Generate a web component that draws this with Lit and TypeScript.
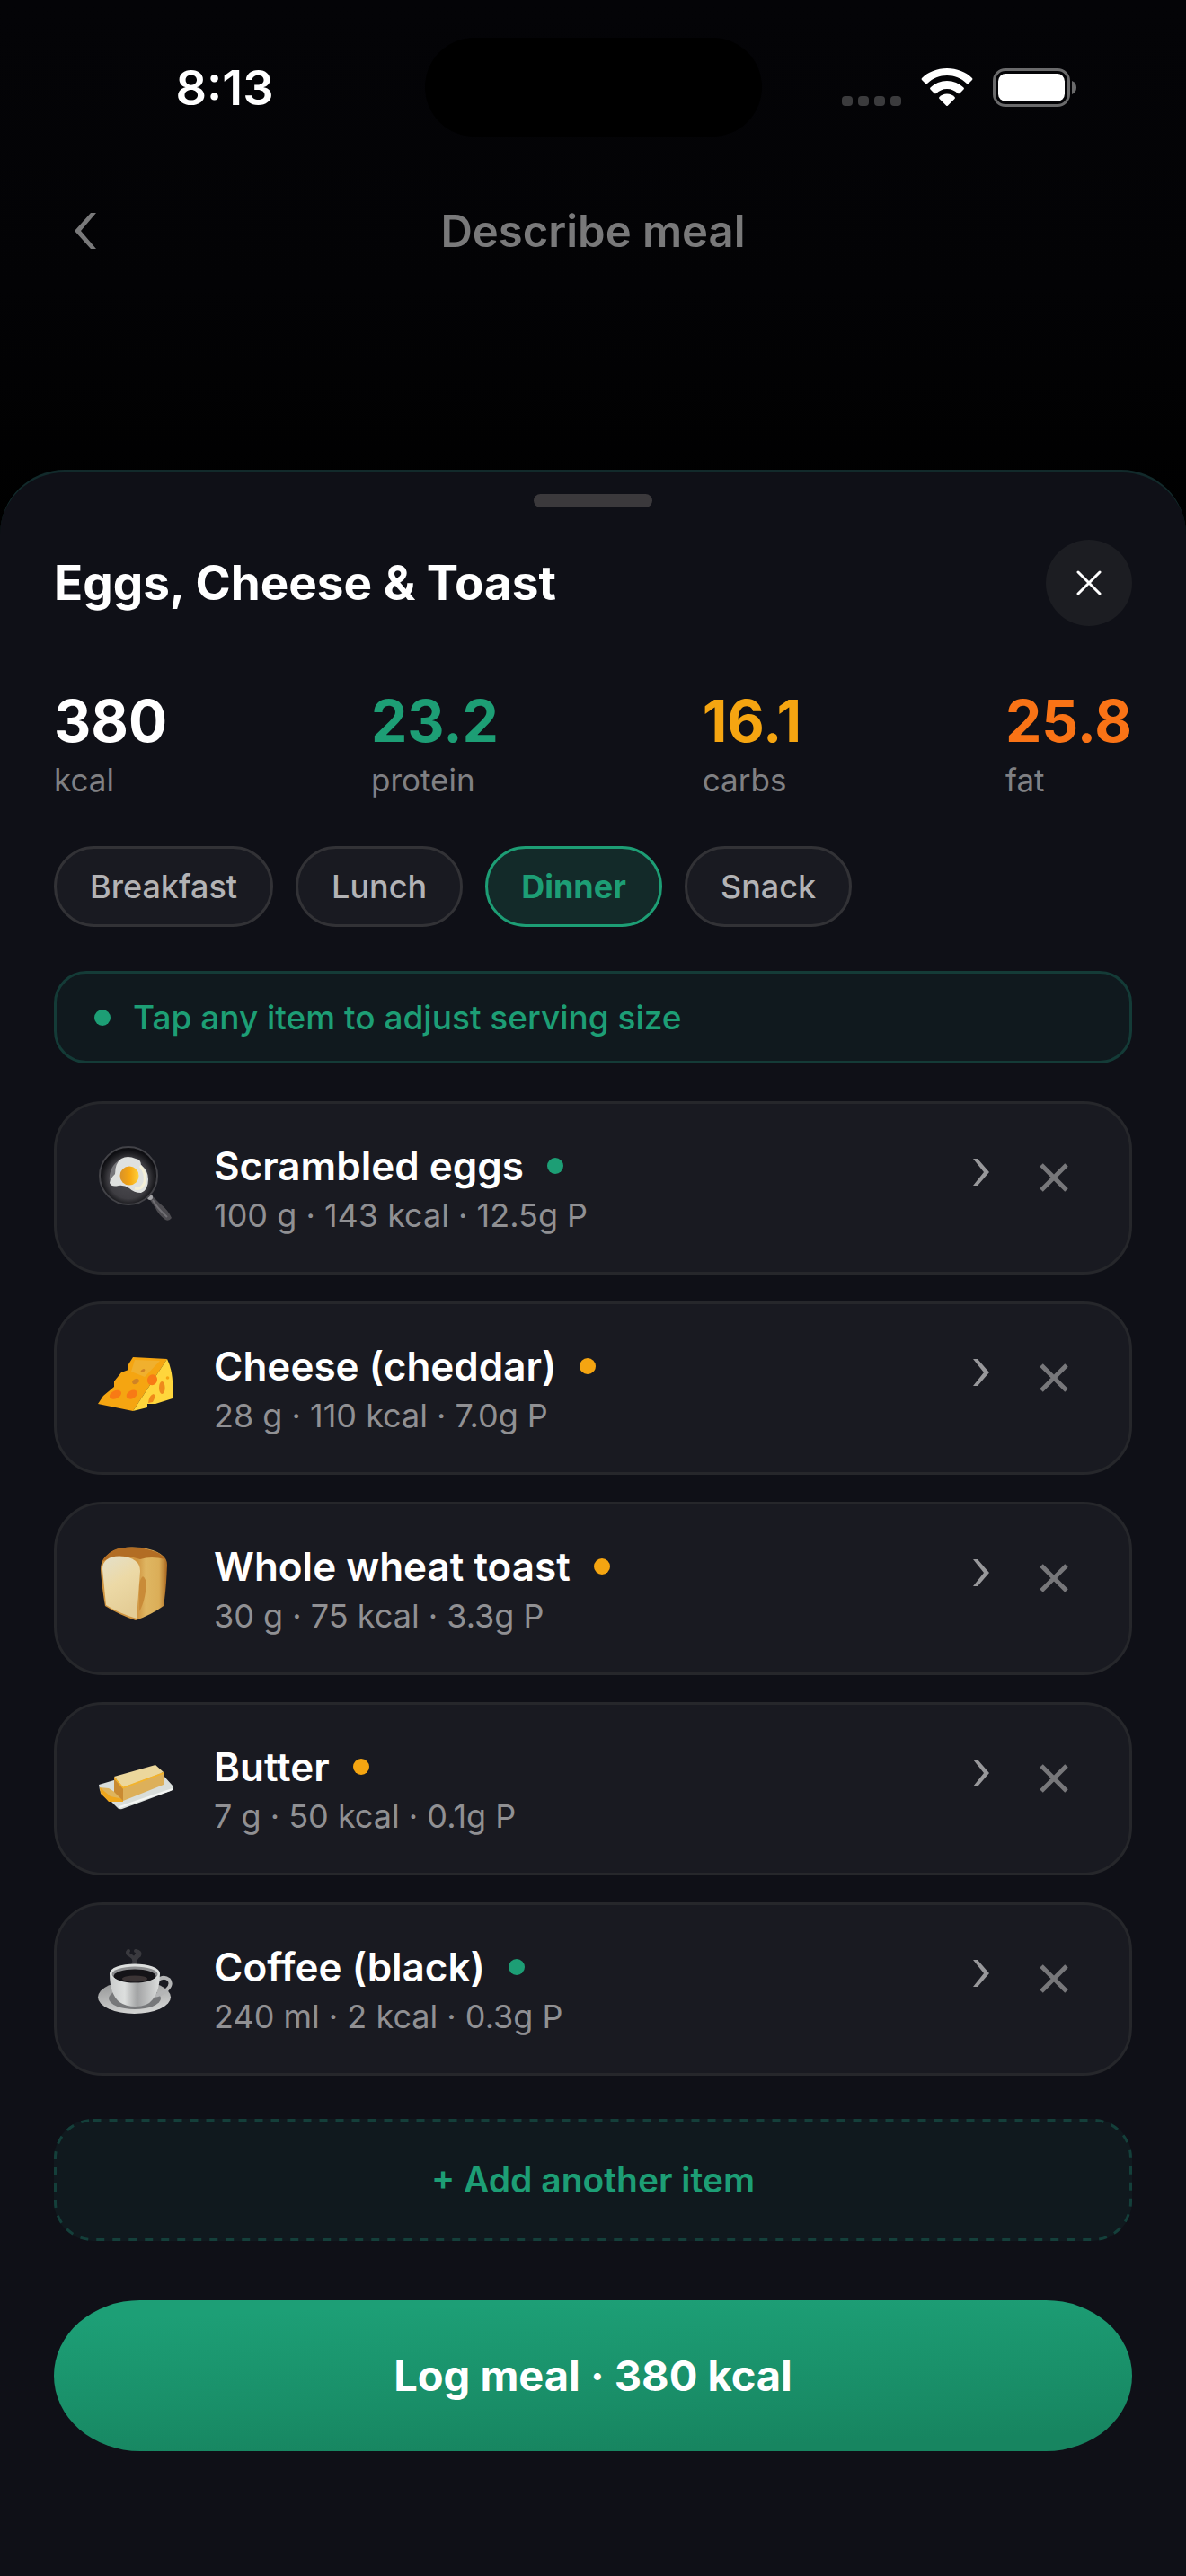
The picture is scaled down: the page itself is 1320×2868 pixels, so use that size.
import { LitElement, css, html, svg } from 'lit';
import { customElement, property, state } from 'lit/decorators.js';
import { classMap } from 'lit/directives/class-map.js';

const pictures: Record<string, any> = {
  eggs: svg`
    <defs>
      <radialGradient id="pan" cx="50%" cy="55%" r="50%">
        <stop offset="0" stop-color="#4c4b50"/>
        <stop offset="0.7" stop-color="#3e3d42"/>
        <stop offset="0.88" stop-color="#1e1e22"/>
        <stop offset="1" stop-color="#0e0e12"/>
      </radialGradient>
      <linearGradient id="yolk" x1="0" x2="1">
        <stop offset="0" stop-color="#d8922a"/>
        <stop offset="0.5" stop-color="#f5a511"/>
        <stop offset="1" stop-color="#ffd23c"/>
      </linearGradient>
    </defs>
    <path d="M57 59L61 57L70 66Q79 73 83 82Q80 86 76 84Q68 78 65 71Z" fill="#4c4b50"/>
    <path d="M62 62Q66 70 78 81" stroke="#706f74" stroke-width="2" fill="none"/>
    <circle cx="59" cy="59" r="3" fill="#a5a5a8"/>
    <circle cx="35" cy="35" r="32" fill="url(#pan)" stroke="#424247" stroke-width="2"/>
    <path d="M14 42Q12 25 27 16Q20 28 19 38Z" fill="#77777b"/>
    <path d="M27 16Q34 12 43 16Q49 17 49 23Q57 29 57 39Q57 51 49 54Q41 54 36 49Q30 45 24 46Q16 48 14 43Q15 38 20 33Q20 21 27 16Z" fill="#dfe1df"/>
    <path d="M48 24Q55 32 53 42Q50 51 42 49" stroke="#f4efd7" stroke-width="3" fill="none"/>
    <circle cx="36" cy="35" r="10.5" fill="url(#yolk)"/>`,
  cheese: svg`
    <path d="M40 14L78 16L40 74L1 66L7 57L19 47L19 41L27 31L35 28L35 22Z" fill="#f5a511"/>
    <path d="M42 17L70 18L53 36L38 30Z" fill="#f0b02e"/>
    <path d="M78 16Q86 32 84 60L65 66L56 66L56 70L40 74Z" fill="#ffd63c"/>
    <ellipse cx="20.500" cy="56" rx="7" ry="4.500" transform="rotate(-25 20 56)" fill="#f87a15"/>
    <ellipse cx="39" cy="55.500" rx="6.500" ry="4.500" transform="rotate(-30 39 56)" fill="#f87a15"/>
    <ellipse cx="43" cy="41" rx="4" ry="2.800" transform="rotate(-25 43 41)" fill="#cf8325"/>
    <ellipse cx="51" cy="29" rx="2.500" ry="1.500" transform="rotate(-30 51 29)" fill="#cf8325"/>
    <ellipse cx="61.500" cy="39" rx="5.500" ry="6" transform="rotate(25 61 39)" fill="#f87a15"/>
    <ellipse cx="72.300" cy="48" rx="3.300" ry="7" fill="#ef8a1c"/>
    <circle cx="78.500" cy="37" r="1.800" fill="#f5a511"/>
    <path d="M57 65Q58 56 63 55Q66 57 62 64Z" fill="#f08a1a"/>`,
  toast: svg`
    <defs>
      <linearGradient id="crumb" x1="0" y1="0" x2="0.4" y2="1">
        <stop offset="0" stop-color="#e4e0cb"/>
        <stop offset="0.5" stop-color="#ecd9a6"/>
        <stop offset="1" stop-color="#e4cd96"/>
      </linearGradient>
      <linearGradient id="crust" x1="0" x2="1">
        <stop offset="0.55" stop-color="#cf9440"/>
        <stop offset="0.68" stop-color="#dfb662"/>
        <stop offset="0.88" stop-color="#dbae58"/>
        <stop offset="1" stop-color="#a8661f"/>
      </linearGradient>
    </defs>
    <path d="M4 27Q4 14 19 6Q30 1 50 3Q78 8 78 22Q77 50 74 68Q60 78 43 84Q25 78 9 68Q5 45 4 27Z" fill="url(#crust)"/>
    <path d="M5 19Q12 7 24 4Q38 1 52 4Q70 7 76 16Q60 12 48 16Q26 8 5 19Z" fill="#b26d24"/>
    <path d="M51 35Q56 38 54 52Q52 66 47 74L47 45Q48 37 51 35Z" fill="#c98b38"/>
    <path d="M6 27Q6 13 25 12.500Q48 14 48 29L44 82Q24 76 10 67Z" fill="url(#crumb)"/>`,
  butter: svg`
    <g transform="translate(0 -2)">
      <path d="M2 46L66 27L84 47Q87 50 82 53L28 73Q24 74 22 71L3 52Z" fill="#d9dedb"/>
      <path d="M25 71L84 51" stroke="#f4f6f4" stroke-width="2"/>
      <path d="M3 49L13 50L29 60L29 64L14 65L4 56Z" fill="#dfb45c"/>
      <path d="M3 49L15 59L29 62L29 65L13 65L4 55Z" fill="#efa71e"/>
      <path d="M19 37L65 24L74 32L29 49Z" fill="#ecd79c"/>
      <path d="M29 49L74 32V46L29 64Z" fill="#ddb05a"/>
      <path d="M19 37L29 49V64L19 54Z" fill="#c98a32"/>
      <path d="M19 38L29 49.500L74 33" stroke="#f5b429" stroke-width="1.500" fill="none"/>
    </g>`,
  coffee: svg`
    <defs>
      <linearGradient id="cup" x1="0" x2="1">
        <stop offset="0" stop-color="#c9cbcb"/>
        <stop offset="0.3" stop-color="#dddfde"/>
        <stop offset="0.55" stop-color="#a2a3a4"/>
        <stop offset="1" stop-color="#dddfde"/>
      </linearGradient>
      <linearGradient id="saucer" x1="0" y1="0" x2="0.3" y2="1">
        <stop offset="0" stop-color="#8f9091"/>
        <stop offset="1" stop-color="#d0d1d0"/>
      </linearGradient>
    </defs>
    <g transform="translate(0 -11)">
      <path d="M40 33Q44 26 37 22Q32 20 35 17M42 32Q42 25 47 22Q49 18 43 17M41 27L45 20" stroke="#47474c" stroke-opacity="0.7" stroke-width="4" stroke-linecap="round" fill="none"/>
      <ellipse cx="41.500" cy="68.500" rx="40.500" ry="18.500" fill="url(#saucer)"/>
      <ellipse cx="42" cy="70" rx="29" ry="12" fill="#77787a"/>
      <path d="M67 50Q74 44 80 49Q84 54 78 60Q72 66 62 67" stroke="#b4b5b6" stroke-width="4" fill="none"/>
      <path d="M14 42Q14 65 25 74Q32 79 43 79Q56 79 62 71Q70 61 70 42Z" fill="url(#cup)"/>
      <ellipse cx="42" cy="42" rx="28" ry="10.500" fill="#dcdedd"/>
      <ellipse cx="42" cy="43" rx="25.500" ry="8.500" fill="#8c8d8f"/>
      <ellipse cx="42" cy="45" rx="23.500" ry="7.500" fill="#141317"/>
      <ellipse cx="42" cy="48" rx="14" ry="3.500" fill="#3b3435"/>
    </g>`,
};

@customElement('food-item')
export class FoodItem extends LitElement {
  @property() name = '';
  @property() info = '';
  @property() picture = '';
  @property() level = '';

  render() {
    return html`
      <div class="card">
        <svg class="picture" viewBox="0 0 86 86" aria-hidden="true">${pictures[this.picture]}</svg>
        <div class="text">
          <div class="name">${this.name} <span class="dot ${this.level}"></span></div>
          <div class="info">${this.info}</div>
        </div>
        <button class="adjust" aria-label="Adjust ${this.name}" @click=${() => this.send('adjust')}>
          <svg width="18" height="30" viewBox="0 0 18 30">
            <path d="M0 0H5L18 15L5 30H0L12 15Z" fill="#98989b"/>
          </svg>
        </button>
        <button class="remove" aria-label="Remove ${this.name}" @click=${() => this.send('remove')}>
          <svg width="32" height="32" viewBox="0 0 32 32">
            <path d="M2 2L30 30M30 2L2 30" stroke="#77777a" stroke-width="5"/>
          </svg>
        </button>
      </div>
    `;
  }

  send(type: string) {
    this.dispatchEvent(new CustomEvent(type));
  }

  static styles = css`
    :host {
      display: block;
    }

    .card {
      display: flex;
      align-items: flex-start;
      padding: 40px 42px 37px 45px;
      border: 3px solid #26272b;
      border-radius: 54px;
      background: #191a21;
    }

    .picture {
      width: 86px;
      height: 96px;
      flex: none;
    }

    .text {
      flex: 1;
      min-width: 0;
      margin-left: 44px;
    }

    .name {
      display: flex;
      align-items: center;
      gap: 26px;
      font-size: 44px;
      font-weight: 600;
      line-height: 58px;
      color: #fff;
    }

    .info {
      font-size: 36px;
      line-height: 52px;
      color: #909093;
    }

    .dot {
      width: 18px;
      height: 18px;
      border-radius: 50%;
      background: #1d9e75;
    }

    .dot.medium {
      background: #f5a511;
    }

    button {
      display: flex;
      align-items: center;
      justify-content: center;
      padding: 0;
      border: 0;
      background: none;
    }

    .adjust {
      width: 78px;
      height: 72px;
    }

    .remove {
      width: 84px;
      height: 84px;
    }
  `;
}

@customElement('app-root')
export class AppRoot extends LitElement {
  @state()
  meal = 'Dinner';

  @state()
  items: any[] = [
    { name: 'Scrambled eggs', info: '100 g · 143 kcal · 12.5g P', picture: 'eggs', level: 'high' },
    { name: 'Cheese (cheddar)', info: '28 g · 110 kcal · 7.0g P', picture: 'cheese', level: 'medium' },
    { name: 'Whole wheat toast', info: '30 g · 75 kcal · 3.3g P', picture: 'toast', level: 'medium' },
    { name: 'Butter', info: '7 g · 50 kcal · 0.1g P', picture: 'butter', level: 'medium' },
    { name: 'Coffee (black)', info: '240 ml · 2 kcal · 0.3g P', picture: 'coffee', level: 'high' },
  ];

  meals = ['Breakfast', 'Lunch', 'Dinner', 'Snack'];

  totals = [
    { value: '380', label: 'kcal' },
    { value: '23.2', label: 'protein' },
    { value: '16.1', label: 'carbs' },
    { value: '25.8', label: 'fat' },
  ];

  render() {
    return html`
      <div class="status">
        <div class="time">8:13</div>
        <div class="island"></div>
        <div class="icons">
          <svg width="66" height="43" viewBox="0 0 66 43" fill="#3b3b3d">
            ${[0, 18, 36, 54].map((x) => svg`<rect x=${x} y="31" width="12" height="11" rx="4"/>`)}
          </svg>
          <svg width="58" height="43" viewBox="0 0 58 43" fill="#fff">
            <path d="M29 0C18 0 8 4 1 11Q0 12 1 13L5 17Q6 18 7 17C13 11 21 8 29 8S45 11 51 17Q52 18 53 17L57 13Q58 12 57 11C50 4 40 0 29 0Z"/>
            <path d="M29 14C22 14 15 17 10.500 21.500Q9.500 22.500 10.500 23.500L15 28Q16 28.500 17 28C20 25 24 23 29 23S38 25 41 28Q42 28.500 43 28L47.500 23.500Q48.500 22.500 47.500 21.500C43 17 36 14 29 14Z"/>
            <path d="M29 28.500C25.500 28.500 22.500 30 20.500 32Q19.500 33 20.500 34L28 41.500Q29 42.500 30 41.500L37.500 34Q38.500 33 37.500 32C35.500 30 32.500 28.500 29 28.500Z"/>
          </svg>
          <svg width="94" height="43" viewBox="0 0 94 43">
            <rect x="1.500" y="1.500" width="83" height="40" rx="12.500" fill="none" stroke="#6a6a6b" stroke-width="3"/>
            <rect x="6" y="6" width="74" height="31" rx="8.500" fill="#fff"/>
            <path d="M88 14Q93 16 93 21.500T88 29Z" fill="#6a6a6b"/>
          </svg>
        </div>
      </div>

      <div class="nav">
        <button class="back" aria-label="Back">
          <svg width="24" height="40" viewBox="0 0 24 40">
            <path d="M18 0H24L7 20L24 40H18L0 20Z" fill="#79797a"/>
          </svg>
        </button>
        <div class="nav-title">Describe meal</div>
      </div>

      <div class="sheet">
        <div class="handle"></div>

        <div class="header">
          <h1 class="title">Eggs, Cheese &amp; Toast</h1>
          <button class="close" aria-label="Close">
            <svg width="28" height="28" viewBox="0 0 28 28">
              <path d="M2 2L26 26M26 2L2 26" stroke="#fff" stroke-width="3" stroke-linecap="round"/>
            </svg>
          </button>
        </div>

        <div class="totals">
          ${this.totals.map((total) => html`
            <div>
              <div class="value ${total.label}">${total.value}</div>
              <div class="label">${total.label}</div>
            </div>
          `)}
        </div>

        <div class="meals">
          ${this.meals.map((meal) => html`
            <button
              class=${classMap({ meal: true, active: meal === this.meal })}
              aria-pressed=${meal === this.meal}
              @click=${() => this.meal = meal}
            >${meal}</button>
          `)}
        </div>

        <div class="hint"><span class="hint-dot"></span>Tap any item to adjust serving size</div>

        <div class="list">
          ${this.items.map((item, index) => html`
            <food-item
              .name=${item.name}
              .info=${item.info}
              .picture=${item.picture}
              .level=${item.level}
              @remove=${() => this.removeItem(index)}
            ></food-item>
          `)}
        </div>

        <button class="add">
          <svg class="dashes" aria-hidden="true"><rect x="1.500" y="1.500" rx="42"/></svg>
          + Add another item
        </button>
        <button class="log">Log meal · 380 kcal</button>
      </div>
    `;
  }

  removeItem(index: number) {
    this.items = this.items.filter((_, i) => i !== index);
  }

  static styles = css`
    :host {
      display: flex;
      flex-direction: column;
      min-height: 100vh;
      box-sizing: border-box;
      padding-top: 42px;
      background: linear-gradient(#040407, #030305 320px, #000 590px);
      font-family: Inter, Roboto, sans-serif;
      color: #fff;
    }

    button {
      font-family: inherit;
    }

    .status {
      display: grid;
      grid-template-columns: 1fr 375px 1fr;
      align-items: center;
    }

    .time {
      padding-right: 168px;
      text-align: right;
      font-size: 54px;
      font-weight: 600;
    }

    .island {
      height: 110px;
      border-radius: 55px;
      background: #000;
    }

    .icons {
      display: flex;
      justify-content: flex-end;
      gap: 22px;
      padding-right: 121px;
    }

    .nav {
      display: grid;
      grid-template-columns: 96px 1fr 96px;
      align-items: center;
      padding: 0 47px;
      margin-top: 57px;
      height: 96px;
    }

    .back {
      display: flex;
      justify-content: center;
      padding: 24px;
      border: 0;
      background: none;
    }

    .nav-title {
      text-align: center;
      font-size: 49px;
      font-weight: 600;
      color: #79797a;
    }

    .sheet {
      flex: 1;
      display: flex;
      flex-direction: column;
      margin-top: 218px;
      padding: 24px 60px 136px;
      border-top: 3px solid #122a2b;
      border-radius: 72px 72px 0 0;
      background: #0f1017;
    }

    .handle {
      align-self: center;
      width: 132px;
      height: 15px;
      border-radius: 8px;
      background: #3b393c;
    }

    .header {
      display: flex;
      align-items: center;
      justify-content: space-between;
      margin-top: 36px;
    }

    .title {
      margin: 0;
      font-size: 53px;
      font-weight: 700;
    }

    .close {
      display: flex;
      align-items: center;
      justify-content: center;
      width: 96px;
      height: 96px;
      padding: 0;
      border: 0;
      border-radius: 50%;
      background: #1c1d22;
    }

    .totals {
      display: flex;
      justify-content: space-between;
      margin-top: 67px;
    }

    .value {
      font-size: 64px;
      font-weight: 700;
      line-height: 78px;
    }

    .value.protein {
      color: #1d9e75;
    }

    .value.carbs {
      color: #f5a511;
    }

    .value.fat {
      color: #f97316;
    }

    .label {
      margin-top: 2px;
      font-size: 35px;
      line-height: 48px;
      color: #808083;
    }

    .meals {
      display: flex;
      flex-wrap: wrap;
      gap: 25px;
      margin-top: 50px;
    }

    .meal {
      padding: 0 37px;
      border: 3px solid #323236;
      border-radius: 45px;
      background: #191a21;
      font-size: 36px;
      font-weight: 500;
      line-height: 84px;
      color: #b3b3b5;
    }

    .meal.active {
      border-color: #1d9e75;
      background: #132a29;
      font-weight: 700;
      color: #1d9e75;
    }

    .hint {
      display: flex;
      align-items: center;
      gap: 25px;
      margin-top: 49px;
      padding: 0 42px;
      border: 3px solid #143b37;
      border-radius: 36px;
      background: #10191e;
      font-size: 37px;
      font-weight: 500;
      line-height: 97px;
      color: #1d9e75;
    }

    .hint-dot {
      width: 18px;
      height: 18px;
      border-radius: 50%;
      background: #1d9e75;
    }

    .list {
      display: flex;
      flex-direction: column;
      gap: 30px;
      margin-top: 42px;
    }

    .add {
      position: relative;
      margin-top: 48px;
      padding: 0;
      border: 0;
      border-radius: 44px;
      background: #10191e;
      font-size: 39px;
      font-weight: 600;
      line-height: 136px;
      color: #1d9e75;
    }

    .dashes {
      position: absolute;
      inset: 0;
      width: 100%;
      height: 100%;
    }

    .dashes rect {
      width: calc(100% - 3px);
      height: calc(100% - 3px);
      fill: none;
      stroke: #143f3a;
      stroke-width: 3px;
      stroke-dasharray: 9px 9px;
    }

    .log {
      margin-top: 66px;
      padding: 0;
      border: 0;
      border-radius: 96px / 84px;
      background: linear-gradient(178deg, #1d9f76 10%, #178560 90%);
      font-size: 47px;
      font-weight: 700;
      line-height: 168px;
      color: #fff;
    }
  `;
}

declare global {
  interface HTMLElementTagNameMap {
    'app-root': AppRoot;
    'food-item': FoodItem;
  }
}
